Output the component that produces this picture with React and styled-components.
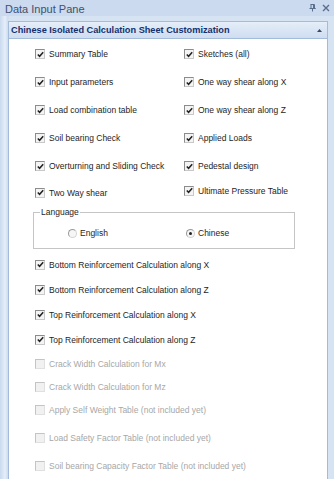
import React from "react";
import styled, { createGlobalStyle } from "styled-components";

const Global = createGlobalStyle`
  html, body { margin: 0; padding: 0; }
  body { background: #d6e3f3; font-family: "Liberation Sans", Arial, sans-serif; }
`;

const Frame = styled.div`
  width: 334px;
  height: 479px;
  overflow: hidden;
  display: flex;
  flex-direction: column;
  background: linear-gradient(to right, #c9daf0 0px, #e6eef9 5px, #cfdcef 8px, #d6e3f3 9px);
`;

const TitleBar = styled.div`
  height: 16px;
  flex: none;
  display: flex;
  align-items: center;
  padding: 0 4px 0 5px;
  background: #cbdaee;
  color: #3d5170;
  font-size: 11px;
`;

const TitleText = styled.span`
  flex: 1;
  padding-top: 1px;
`;

const TitleIcons = styled.div`
  display: flex;
  align-items: center;
  gap: 6px;
  color: #5a6e8c;
`;

const Body = styled.div`
  flex: 1;
  display: flex;
  padding: 5px 6px 0 8px;
  min-height: 0;
`;

const Panel = styled.div`
  flex: 1;
  display: flex;
  flex-direction: column;
  border: 1px solid #a3bcdc;
  border-bottom: none;
  background: #fff;
`;

const PanelHeader = styled.div`
  height: 16px;
  flex: none;
  display: flex;
  align-items: center;
  padding: 0 5px 0 2px;
  background: linear-gradient(#e5eef9, #cfddf0);
  border-bottom: 1px solid #a3bcdc;
  color: #15306e;
  font-weight: bold;
  font-size: 9.2px;
`;

const HeaderText = styled.span`
  flex: 1;
`;

const Content = styled.div`
  flex: 1;
  padding: 1px 0 0 26px;
  display: flex;
  flex-direction: column;
`;

const Grid = styled.div`
  display: grid;
  grid-template-columns: 149px 1fr;
`;

const Row = styled.div`
  height: ${(p) => p.$h}px;
  display: flex;
  align-items: center;
  gap: 4px;
  font-size: 8.5px;
  color: ${(p) => (p.$disabled ? "#a7a7a7" : "#1e1e1e")};
  white-space: nowrap;
`;

const Box = styled.span`
  width: 8px;
  height: 8px;
  flex: none;
  border: 1px solid ${(p) => (p.$disabled ? "#c4c4c4" : "#8c8c8c")};
  border-right-color: ${(p) => (p.$disabled ? "#e0e0e0" : "#c8c8c8")};
  border-bottom-color: ${(p) => (p.$disabled ? "#e0e0e0" : "#c8c8c8")};
  background: ${(p) => (p.$disabled ? "#f1f1f1" : "#f4f4f4")};
  display: flex;
  align-items: center;
  justify-content: center;
`;

const Group = styled.fieldset`
  margin: 2px 0 3px -2px;
  width: 262px;
  box-sizing: border-box;
  height: 42px;
  border: 1px solid #c5c5c5;
  padding: 0 0 0 34px;
  min-width: 0;
`;

const Legend = styled.legend`
  font-size: 8.5px;
  color: #1e1e1e;
  padding: 0 1px;
  margin-left: -28px;
  line-height: 10px;
`;

const RadioRow = styled.div`
  display: grid;
  grid-template-columns: 118px 1fr;
  align-items: center;
  height: 20px;
  margin-top: 6px;
`;

const RadioItem = styled.div`
  display: flex;
  align-items: center;
  gap: 3px;
  font-size: 8.5px;
  color: #1e1e1e;
`;

const RadioCircle = styled.span`
  width: 7px;
  height: 7px;
  border-radius: 50%;
  border: 1px solid #9a9a9a;
  border-right-color: #d4d4d4;
  border-bottom-color: #d4d4d4;
  background: #f6f6f6;
  display: flex;
  align-items: center;
  justify-content: center;
  &::after {
    content: "";
    width: 3px;
    height: 3px;
    border-radius: 50%;
    background: ${(p) => (p.$on ? "#222" : "transparent")};
  }
`;

const Check = ({ label, disabled, checked = true, h = 28 }) => (
  <Row $h={h} $disabled={disabled}>
    <Box $disabled={disabled}>
      {checked && !disabled && (
        <svg width="7" height="7" viewBox="0 0 7 7">
          <path d="M0.8 3.4 L2.6 5.3 L6.2 1.2" fill="none" stroke="#222" strokeWidth="1.5" />
        </svg>
      )}
    </Box>
    <span>{label}</span>
  </Row>
);

const Radio = ({ label, on }) => (
  <RadioItem>
    <RadioCircle $on={on} />
    <span>{label}</span>
  </RadioItem>
);

export default function App() {
  return (
    <>
      <Global />
      <Frame>
        <TitleBar>
          <TitleText>Data Input Pane</TitleText>
          <TitleIcons>
            <svg width="7" height="8" viewBox="0 0 7 8">
              <path d="M1.5 0.5 H5.5 V4.5 H6.5 M0.5 4.5 H6.5 M3.5 4.5 V7.5 M2 0.5 V4.5 M4.5 0.5 V4.5" fill="none" stroke="#5a6e8c" strokeWidth="1" />
            </svg>
            <svg width="8" height="8" viewBox="0 0 8 8">
              <path d="M1 1 L7 7 M7 1 L1 7" stroke="#5a6e8c" strokeWidth="1.4" />
            </svg>
          </TitleIcons>
        </TitleBar>
        <Body>
          <Panel>
            <PanelHeader>
              <HeaderText>Chinese Isolated Calculation Sheet Customization</HeaderText>
              <svg width="5" height="3" viewBox="0 0 5 3">
                <path d="M0 3 L2.5 0 L5 3 Z" fill="#3a4a66" />
              </svg>
            </PanelHeader>
            <Content>
              <Grid>
                <Check label="Summary Table" />
                <Check label="Sketches (all)" />
                <Check label="Input parameters" />
                <Check label="One way shear along X" />
                <Check label="Load combination table" />
                <Check label="One way shear along Z" />
                <Check label="Soil bearing Check" />
                <Check label="Applied Loads" />
                <Check label="Overturning and Sliding Check" />
                <Check label="Pedestal design" />
                <Check label="Two Way shear" h={25} />
                <Check label="Ultimate Pressure Table" h={21} />
              </Grid>
              <Group>
                <Legend>Language</Legend>
                <RadioRow>
                  <Radio label="English" />
                  <Radio label="Chinese" on />
                </RadioRow>
              </Group>
              <Check label="Bottom Reinforcement Calculation along X" h={25} />
              <Check label="Bottom Reinforcement Calculation along Z" h={25} />
              <Check label="Top Reinforcement Calculation along X" h={25} />
              <Check label="Top Reinforcement Calculation along Z" h={25} />
              <Check label="Crack Width Calculation for Mx" h={23} disabled />
              <Check label="Crack Width Calculation for Mz" h={23} disabled />
              <Check label="Apply Self Weight Table (not included yet)" h={23} disabled />
              <Check label="Load Safety Factor Table (not included yet)" h={33} disabled />
              <Check label="Soil bearing Capacity Factor Table (not included yet)" h={23} disabled />
            </Content>
          </Panel>
        </Body>
      </Frame>
    </>
  );
}
